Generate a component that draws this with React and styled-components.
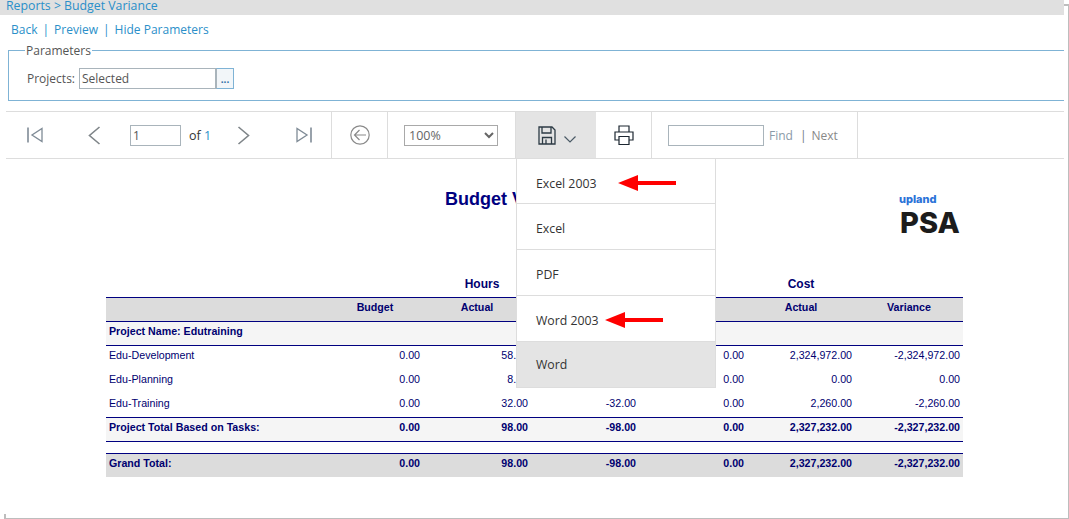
import styled, { createGlobalStyle } from "styled-components";

const GlobalStyle = createGlobalStyle`
  html, body {
    margin: 0;
    padding: 0;
    background: #fff;
  }
  body {
    font-family: "Open Sans", "Liberation Sans", sans-serif;
    overflow: hidden;
  }
`;

const rows = [
  { name: "Edu-Development", values: ["0.00", "58.00", "-58.00", "0.00", "2,324,972.00", "-2,324,972.00"] },
  { name: "Edu-Planning", values: ["0.00", "8.00", "-8.00", "0.00", "0.00", "0.00"] },
  { name: "Edu-Training", values: ["0.00", "32.00", "-32.00", "0.00", "2,260.00", "-2,260.00"] },
];
const totals = ["0.00", "98.00", "-98.00", "0.00", "2,327,232.00", "-2,327,232.00"];

const RedArrow = () => (
  <svg width="58" height="16" viewBox="0 0 58 16">
    <path d="M0 8 L20 0 V6 H58 V10 H20 V16 Z" fill="#ff0000" />
  </svg>
);

const FirstIcon = () => (
  <svg width="16" height="16" viewBox="0 0 16 16" fill="none" stroke="#7f8b96" strokeWidth="1.3">
    <path d="M1 .5 V15.5" strokeWidth="1.6" />
    <path d="M15 1.5 V14.5 L5 8 Z" />
  </svg>
);

const LastIcon = () => (
  <svg width="16" height="16" viewBox="0 0 16 16" fill="none" stroke="#7f8b96" strokeWidth="1.3">
    <path d="M15 .5 V15.5" strokeWidth="1.6" />
    <path d="M1 1.5 V14.5 L11 8 Z" />
  </svg>
);

const Chevron = ({ flip }) => (
  <svg width="13" height="19" viewBox="0 0 13 19" fill="none" stroke="#7f8589" strokeWidth="1.6">
    <path d={flip ? "M1.5 1 L11.5 9.5 L1.5 18" : "M11.5 1 L1.5 9.5 L11.5 18"} />
  </svg>
);

const BackIcon = () => (
  <svg width="20" height="20" viewBox="0 0 20 20" fill="none" stroke="#8a8a8a" strokeWidth="1.2">
    <circle cx="10" cy="10" r="9.2" />
    <path d="M16 10 H4.5 M9.5 5 L4.5 10 L9.5 15" />
  </svg>
);

const SaveIcon = () => (
  <svg width="18" height="19" viewBox="0 0 18 19" fill="none" stroke="#2c3a44" strokeWidth="1.3">
    <path d="M1 1 H14 L17 4 V18 H1 Z" />
    <path d="M4 1 V7 H13 V1" />
    <path d="M4.5 18 V11.5 H13.5 V18" />
    <path d="M8 13.5 V18" />
  </svg>
);

const SmallChevron = () => (
  <svg width="12" height="7" viewBox="0 0 12 7" fill="none" stroke="#4a5a66" strokeWidth="1.2">
    <path d="M.5 .5 L6 6 L11.5 .5" />
  </svg>
);

const PrintIcon = () => (
  <svg width="20" height="20" viewBox="0 0 20 20" fill="none" stroke="#1c2630" strokeWidth="1.2">
    <path d="M5 7 V1 H15 V7" />
    <path d="M5 15 H1 V7 H19 V15 H15" />
    <path d="M5 11.5 H15 V19.5 H5 Z" />
  </svg>
);

export default function App() {
  return (
    <Page>
      <GlobalStyle />
      <Content>
        <TitleBar>Reports &gt; Budget Variance</TitleBar>
        <LinkRow>
          <a>Back</a>
          <Sep>|</Sep>
          <a>Preview</a>
          <Sep>|</Sep>
          <a>Hide Parameters</a>
        </LinkRow>
        <Params>
          <legend>Parameters</legend>
          <ParamLabel>Projects:</ParamLabel>
          <ParamInput readOnly value="Selected" />
          <ParamButton>...</ParamButton>
        </Params>
        <Toolbar>
          <NavCell>
            <NavSlot $ml={21}><FirstIcon /></NavSlot>
            <NavSlot $ml={45}><Chevron /></NavSlot>
            <PageInput readOnly value="1" />
            <OfText>of <b>1</b></OfText>
            <NavSlot $ml={26}><Chevron flip /></NavSlot>
            <NavSlot $ml={46}><LastIcon /></NavSlot>
          </NavCell>
          <Cell $w={56} $center><BackIcon /></Cell>
          <Cell $w={128} $center>
            <ZoomSelect defaultValue="100%">
              <option>100%</option>
              <option>75%</option>
              <option>50%</option>
            </ZoomSelect>
          </Cell>
          <SaveCell>
            <SaveIcon />
            <SmallChevron />
            <Menu>
              <MenuItem>Excel 2003<ArrowGap $gap={21}><RedArrow /></ArrowGap></MenuItem>
              <MenuItem>Excel</MenuItem>
              <MenuItem>PDF</MenuItem>
              <MenuItem>Word 2003<ArrowGap $gap={6}><RedArrow /></ArrowGap></MenuItem>
              <MenuItem $active>Word</MenuItem>
            </Menu>
          </SaveCell>
          <Cell $w={56} $center><PrintIcon /></Cell>
          <FindCell>
            <FindInput readOnly />
            <FindText>Find</FindText>
            <FindSep>|</FindSep>
            <NextText>Next</NextText>
          </FindCell>
        </Toolbar>
        <Report>
          <ReportHead>
            <ReportTitle>Budget Variance</ReportTitle>
            <Logo>
              <LogoTop>upland</LogoTop>
              <LogoMain>PSA</LogoMain>
            </Logo>
          </ReportHead>
          <Table>
            <colgroup>
              <col style={{ width: 209 }} />
              <col span="6" style={{ width: 108 }} />
            </colgroup>
            <tbody>
              <GroupRow>
                <td />
                <td />
                <HoursCell>Hours</HoursCell>
                <td />
                <td />
                <td>Cost</td>
                <td />
              </GroupRow>
              <HeadRow>
                <td />
                <td>Budget</td>
                <td>Actual</td>
                <td>Variance</td>
                <td>Budget</td>
                <td>Actual</td>
                <td>Variance</td>
              </HeadRow>
              <ProjectRow>
                <td colSpan="7">Project Name: Edutraining</td>
              </ProjectRow>
              {rows.map((r) => (
                <DataRow key={r.name}>
                  <td>{r.name}</td>
                  {r.values.map((v, i) => (
                    <td key={i}>{v}</td>
                  ))}
                </DataRow>
              ))}
              <TotalRow>
                <td>Project Total Based on Tasks:</td>
                {totals.map((v, i) => (
                  <td key={i}>{v}</td>
                ))}
              </TotalRow>
              <SpacerRow>
                <td colSpan="7" />
              </SpacerRow>
              <TotalRow $grand>
                <td>Grand Total:</td>
                {totals.map((v, i) => (
                  <td key={i}>{v}</td>
                ))}
              </TotalRow>
            </tbody>
          </Table>
        </Report>
      </Content>
    </Page>
  );
}

const Page = styled.div`
  position: relative;
  width: 1069px;
  height: 519px;
  overflow: hidden;
  background: #fff;
  &::before {
    content: "";
    position: absolute;
    left: 4px;
    top: 4px;
    right: -1px;
    bottom: -1px;
    border: 2px solid #bdbdbd;
  }
`;
const Content = styled.div`
  position: relative;
  width: 1064px;
  height: 514px;
  background: #fff;
`;
const TitleBar = styled.div`
  height: 15px;
  background: #e0e0e0;
  color: #2a8fc9;
  font-size: 12.3px;
  line-height: 12px;
  padding-left: 6px;
`;
const LinkRow = styled.div`
  display: flex;
  align-items: center;
  height: 28px;
  padding-left: 11px;
  font-size: 12px;
  color: #2a8fc9;
`;
const Sep = styled.span`
  margin: 0 5px;
`;
const Params = styled.fieldset`
  display: flex;
  align-items: center;
  box-sizing: border-box;
  height: 58px;
  margin: 0 0 10px 8px;
  padding: 0 0 1px 18px;
  border: 1px solid #7fb3d5;
  border-right: none;
  min-width: 0;
  legend {
    font-size: 12px;
    line-height: 15px;
    padding: 0 1px;
    margin-left: -2px;
    color: #555;
  }
`;
const ParamLabel = styled.span`
  font-size: 12px;
  color: #555;
  margin-right: 4px;
`;
const ParamInput = styled.input`
  box-sizing: border-box;
  width: 137px;
  height: 21px;
  border: 1px solid #a9b4bb;
  padding: 0 2px;
  font: 12px "Open Sans", sans-serif;
  color: #555;
  outline: none;
`;
const ParamButton = styled.div`
  box-sizing: border-box;
  width: 18px;
  height: 21px;
  border: 1px solid #7fb3d5;
  border-left: 1px solid #a9b4bb;
  background: #f2f6f9;
  color: #2a6fa5;
  font-size: 10px;
  font-weight: 700;
  line-height: 21px;
  text-align: center;
`;
const Toolbar = styled.div`
  display: flex;
  height: 46px;
  margin-left: 6px;
  border-top: 1px solid #ddd;
  border-bottom: 1px solid #ddd;
`;
const Cell = styled.div`
  display: flex;
  align-items: center;
  justify-content: ${(p) => (p.$center ? "center" : "flex-start")};
  width: ${(p) => p.$w}px;
  box-sizing: border-box;
  border-right: 1px solid #ddd;
`;
const NavCell = styled(Cell)`
  width: 326px;
`;
const NavSlot = styled.div`
  display: flex;
  margin-left: ${(p) => p.$ml}px;
`;
const PageInput = styled.input`
  box-sizing: border-box;
  width: 51px;
  height: 21px;
  margin-left: 29px;
  border: 1px solid #a9b4bb;
  padding: 0 2px;
  font: 12px "Open Sans", sans-serif;
  color: #555;
  outline: none;
`;
const OfText = styled.span`
  margin-left: 8px;
  font-size: 12.5px;
  color: #333;
  b {
    font-weight: 400;
    color: #2a8fc9;
  }
`;
const ZoomSelect = styled.select`
  box-sizing: border-box;
  width: 94px;
  height: 21px;
  margin-right: 1px;
  background: #fff;
  border: 1px solid #a9a9a9;
  border-radius: 0;
  font: 12.5px "Open Sans", sans-serif;
  color: #666;
  outline: none;
`;
const SaveCell = styled.div`
  position: relative;
  display: flex;
  align-items: center;
  width: 80px;
  padding-left: 22px;
  gap: 8px;
  box-sizing: border-box;
  background: #e4e4e4;
  svg:nth-child(2) {
    margin-top: 9px;
  }
`;
const Menu = styled.div`
  position: absolute;
  left: 0;
  top: 47px;
  width: 200px;
  background: #fff;
  border-left: 1px solid #ddd;
  box-sizing: border-box;
  z-index: 5;
`;
const MenuItem = styled.div`
  display: flex;
  align-items: center;
  box-sizing: border-box;
  height: 46px;
  padding: 3px 0 0 19px;
  font-size: 12.3px;
  color: #333;
  background: ${(p) => (p.$active ? "#e4e4e4" : "#fff")};
  border-bottom: 1px solid #ddd;
  border-right: 1px solid #ddd;
  &:first-child {
    height: 45px;
    padding-top: 4px;
  }
  &:last-child {
    padding-top: 0;
  }
`;
const ArrowGap = styled.span`
  display: flex;
  margin-left: ${(p) => p.$gap}px;
`;
const FindCell = styled(Cell)`
  width: 206px;
  padding-left: 16px;
`;
const FindInput = styled.input`
  box-sizing: border-box;
  width: 96px;
  height: 21px;
  border: 1px solid #a9b4bb;
  outline: none;
`;
const FindText = styled.span`
  margin-left: 5px;
  font-size: 12px;
  color: #8a9aa8;
`;
const FindSep = styled.span`
  margin-left: 7px;
  font-size: 12px;
  color: #6a7680;
`;
const NextText = styled.span`
  margin-left: 5px;
  font-size: 12px;
  color: #888;
`;
const Report = styled.div`
  padding: 0 0 0 106px;
`;
const ReportHead = styled.div`
  display: flex;
  justify-content: space-between;
  box-sizing: border-box;
  width: 857px;
  height: 114px;
  padding: 30px 3px 0 339px;
`;
const ReportTitle = styled.div`
  font: 700 18px/20px "Liberation Sans", Arial, sans-serif;
  color: #000080;
`;
const Logo = styled.div`
  display: flex;
  flex-direction: column;
  width: 61px;
  margin-top: 4px;
`;
const LogoTop = styled.span`
  font: 800 11px/12px "Inter", sans-serif;
  color: #2a72d8;
`;
const LogoMain = styled.span`
  font: 800 29px/29px "Inter", sans-serif;
  color: #1c1c1c;
  margin: 3px 0 0 1px;
`;
const Table = styled.table`
  width: 857px;
  table-layout: fixed;
  border-collapse: collapse;
  font: 10.67px "Liberation Sans", Arial, sans-serif;
  color: #000070;
  td {
    padding: 0 3px 4px;
    white-space: nowrap;
  }
`;
const GroupRow = styled.tr`
  height: 24px;
  border-bottom: 1px solid #000080;
  td {
    font-size: 12px;
    font-weight: 700;
    text-align: center;
    padding-bottom: 2px;
  }
`;
const HoursCell = styled.td`
  && {
    padding-left: 13px;
  }
`;
const HeadRow = styled.tr`
  height: 24px;
  background: #dcdcdc;
  border-bottom: 1px solid #000080;
  td {
    font-weight: 700;
    text-align: center;
  }
  td:nth-child(2) {
    padding-left: 15px;
  }
`;
const ProjectRow = styled.tr`
  height: 24px;
  background: #f5f5f5;
  border-bottom: 1px solid #000080;
  td {
    font-weight: 700;
  }
`;
const DataRow = styled.tr`
  height: 24px;
  td:not(:first-child) {
    text-align: right;
  }
`;
const TotalRow = styled.tr`
  height: 24px;
  background: ${(p) => (p.$grand ? "#dcdcdc" : "#f5f5f5")};
  border-top: 1px solid #000080;
  border-bottom: ${(p) => (p.$grand ? "none" : "1px solid #000080")};
  td {
    font-weight: 700;
  }
  td:not(:first-child) {
    text-align: right;
  }
`;
const SpacerRow = styled.tr`
  height: 12px;
  td {
    padding: 0;
  }
`;
